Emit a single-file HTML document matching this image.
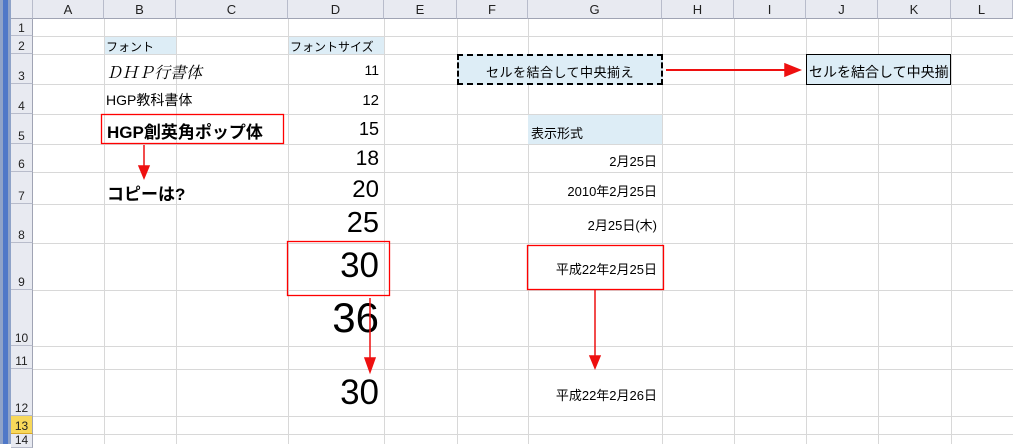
<!DOCTYPE html><html><head><meta charset="utf-8"><style>
body{margin:0;width:1013px;height:444px;overflow:hidden;background:#fff;font-family:"Liberation Sans","Noto Sans CJK JP",sans-serif;position:relative}
div{position:absolute;box-sizing:border-box}
.vl{top:19px;bottom:0;width:1px;background:#d8d8d8}
.hl{left:33px;right:0;height:1px;background:#d8d8d8}
.ch{top:0;height:19px;background:#e8eaf1;border-right:1px solid #b8bccb;border-bottom:1px solid #a0a4b4;font-size:13px;text-align:center;line-height:19px;color:#222}
.rh{left:11px;width:22px;background:#e8eaf1;border-bottom:1px solid #b8bccb;border-right:1px solid #a0a4b4;font-size:12px;text-align:center;color:#222}
.rh span{position:absolute;bottom:0;left:0;right:0;line-height:14px}
.t{white-space:nowrap;color:#000}
.r{text-align:right}
</style></head><body>
<div style="left:0;top:0;width:11px;height:444px;background:#8fa3c8"></div>
<div style="left:3px;top:0;width:5px;height:444px;background:#4f78c8"></div>
<div class="ch" style="left:11px;width:22px"></div>
<div class="ch" style="left:33px;width:71px">A</div>
<div class="ch" style="left:104px;width:72px">B</div>
<div class="ch" style="left:176px;width:112px">C</div>
<div class="ch" style="left:288px;width:96px">D</div>
<div class="ch" style="left:384px;width:73px">E</div>
<div class="ch" style="left:457px;width:71px">F</div>
<div class="ch" style="left:528px;width:134px">G</div>
<div class="ch" style="left:662px;width:72px">H</div>
<div class="ch" style="left:734px;width:72px">I</div>
<div class="ch" style="left:806px;width:72px">J</div>
<div class="ch" style="left:878px;width:73px">K</div>
<div class="ch" style="left:951px;width:62px">L</div>
<div class="vl" style="left:104px"></div><div class="vl" style="left:176px"></div><div class="vl" style="left:288px"></div><div class="vl" style="left:384px"></div><div class="vl" style="left:457px"></div><div class="vl" style="left:528px"></div><div class="vl" style="left:662px"></div><div class="vl" style="left:734px"></div><div class="vl" style="left:806px"></div><div class="vl" style="left:878px"></div><div class="vl" style="left:951px"></div>
<div class="hl" style="top:36px"></div><div class="hl" style="top:54px"></div><div class="hl" style="top:84px"></div><div class="hl" style="top:114px"></div><div class="hl" style="top:144px"></div><div class="hl" style="top:172px"></div><div class="hl" style="top:204px"></div><div class="hl" style="top:243px"></div><div class="hl" style="top:290px"></div><div class="hl" style="top:346px"></div><div class="hl" style="top:369px"></div><div class="hl" style="top:416px"></div><div class="hl" style="top:434px"></div>
<div class="rh" style="top:19px;height:17px"><span>1</span></div>
<div class="rh" style="top:36px;height:18px"><span>2</span></div>
<div class="rh" style="top:54px;height:30px"><span>3</span></div>
<div class="rh" style="top:84px;height:30px"><span>4</span></div>
<div class="rh" style="top:114px;height:30px"><span>5</span></div>
<div class="rh" style="top:144px;height:28px"><span>6</span></div>
<div class="rh" style="top:172px;height:32px"><span>7</span></div>
<div class="rh" style="top:204px;height:39px"><span>8</span></div>
<div class="rh" style="top:243px;height:47px"><span>9</span></div>
<div class="rh" style="top:290px;height:56px"><span>10</span></div>
<div class="rh" style="top:346px;height:23px"><span>11</span></div>
<div class="rh" style="top:369px;height:47px"><span>12</span></div>
<div class="rh" style="top:416px;height:18px;background:#f8d85a;border-bottom:1px solid #d8a828"><span>13</span></div>
<div class="rh" style="top:434px;height:14px"><span>14</span></div>
<div style="left:105px;top:37px;width:71px;height:17px;background:#ddedf6"></div>
<div class="t" style="left:106px;top:38px;font-size:12px">フォント</div>
<div style="left:289px;top:37px;width:95px;height:17px;background:#ddedf6"></div>
<div class="t" style="left:290px;top:38px;font-size:12px">フォントサイズ</div>
<div class="t" style="left:106px;top:60px;font-size:16px;font-style:italic;font-family:'Noto Serif CJK SC',serif">ＤＨＰ行書体</div>
<div class="t" style="left:106px;top:90px;font-size:14px">HGP教科書体</div>
<div class="t" style="left:107px;top:118px;font-size:17px;font-weight:bold">HGP創英角ポップ体</div>
<div class="t" style="left:107px;top:180px;font-size:17px;font-weight:bold">コピーは?</div>
<div class="t r" style="right:634px;top:62px;font-size:14px">11</div>
<div class="t r" style="right:634px;top:92px;font-size:15px">12</div>
<div class="t r" style="right:634px;top:119px;font-size:18px">15</div>
<div class="t r" style="right:634px;top:147px;font-size:21px">18</div>
<div class="t r" style="right:634px;top:176px;font-size:24px">20</div>
<div class="t r" style="right:634px;top:207px;font-size:29px">25</div>
<div class="t r" style="right:634px;top:246px;font-size:35px">30</div>
<div class="t r" style="right:634px;top:294px;font-size:42px">36</div>
<div class="t r" style="right:634px;top:373px;font-size:35px">30</div>
<div style="left:457px;top:54px;width:206px;height:31px;background:#ddedf6;border:2px dashed #000"></div>
<div class="t" style="left:457px;top:62px;width:206px;text-align:center;font-size:13px;letter-spacing:0.5px">セルを結合して中央揃え</div>
<div style="left:806px;top:54px;width:145px;height:31px;background:#ddedf6;border:1px solid #000;overflow:hidden"><div class="t" style="left:2px;top:7px;font-size:14px">セルを結合して中央揃え</div></div>
<div style="left:528px;top:115px;width:134px;height:29px;background:#ddedf6"></div>
<div class="t" style="left:531px;top:123px;font-size:13px">表示形式</div>
<div class="t r" style="right:356px;top:151px;font-size:13px">2月25日</div>
<div class="t r" style="right:356px;top:181px;font-size:13px">2010年2月25日</div>
<div class="t r" style="right:356px;top:215px;font-size:13px">2月25日(木)</div>
<div class="t r" style="right:356px;top:259px;font-size:13px">平成22年2月25日</div>
<div class="t r" style="right:356px;top:385px;font-size:13px">平成22年2月26日</div>
<svg style="position:absolute;left:0;top:0" width="1013" height="444">
<g fill="none" stroke="#ff0000" stroke-width="1.3">
<rect x="101.5" y="114.5" width="182" height="29"/>
<rect x="287.5" y="241.5" width="102" height="54"/>
<rect x="527.5" y="245.5" width="136" height="44"/>
</g>
<g stroke="#ee1010" stroke-width="1.5" fill="#ee1010">
<line x1="144" y1="145" x2="144" y2="170"/><polygon points="139,166 149,166 144,178"/>
<line x1="370" y1="298" x2="370" y2="362"/><polygon points="365,358 375,358 370,372"/>
<line x1="595" y1="290" x2="595" y2="360"/><polygon points="590,356 600,356 595,368"/>
<line x1="666" y1="70" x2="788" y2="70" stroke-width="2"/><polygon points="785,64 800,70 785,76"/>
</g></svg>
</body></html>
